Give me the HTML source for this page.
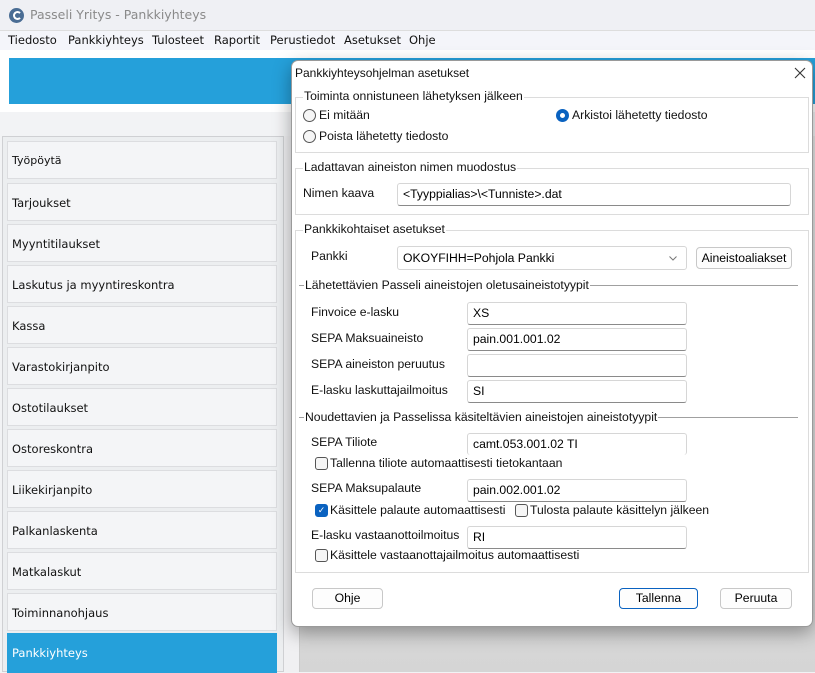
<!DOCTYPE html>
<html><head><meta charset="utf-8"><style>
*{box-sizing:border-box;margin:0;padding:0}
body{width:815px;height:672px;overflow:hidden;position:relative;background:#f2f3f5;font-family:"Liberation Sans",Arial,sans-serif;font-size:12px;color:#000}
.a{position:absolute}
.side{font-family:"DejaVu Sans","Liberation Sans",sans-serif;font-size:11.5px;color:#111}
.menu span{position:absolute;top:33px;font-family:"DejaVu Sans",sans-serif;font-size:11.5px;color:#111}
.item{position:absolute;left:7px;width:270px;height:38px;background:#f4f5f7;border:1px solid #dcdde0;padding-left:4px;line-height:38px}
.dlg{left:291px;top:60px;width:522px;height:567px;background:#fff;border:1px solid #9a9a9a;border-radius:7px;box-shadow:0 6px 18px rgba(0,0,0,.35)}
.grp{position:absolute;border:1px solid #dcdcdc}
.lg{position:absolute;background:#fff;padding:0 1px;font-size:12.2px;color:#111;white-space:nowrap}
.inp{position:absolute;border:1px solid #d6d6d6;border-bottom-color:#8a8a8a;border-radius:3px;background:#fff;padding-left:5px;line-height:21px;font-size:12.2px}
.lbl{position:absolute;font-size:12.2px;color:#111;white-space:nowrap}
.rad{position:absolute;width:13px;height:13px;border:1px solid #555;border-radius:50%;background:#f6f6f6}
.cb{position:absolute;width:13px;height:13px;border:1px solid #555;border-radius:3px;background:#f6f6f6}
.btn{position:absolute;border:1px solid #c8c8c8;border-radius:4px;background:#fdfdfd;text-align:center;line-height:19px;font-size:12.2px}
.line{position:absolute;height:1px;background:#a0a0a0}
</style></head><body>
<div class="a" style="left:0;top:0;width:815px;height:30px;background:#eff0f4"></div>
<div class="a" style="left:9px;top:8px;width:15px;height:15px;border-radius:50%;background:#4a6d94"></div>
<div class="a" style="left:13px;top:11px;width:9px;height:9px;border-radius:50%;border:2px solid #fff;border-right-color:transparent"></div>
<div class="a" style="left:30px;top:7px;color:#8a8a8a;font-size:12.5px;font-family:'DejaVu Sans',sans-serif">Passeli Yritys - Pankkiyhteys</div>
<div class="a" style="left:0;top:30px;width:815px;height:20px;background:#f4f5fa;border-top:1px solid #ddd"></div>
<div class="menu"><span style="left:8px">Tiedosto</span><span style="left:68px">Pankkiyhteys</span><span style="left:152px">Tulosteet</span><span style="left:214px">Raportit</span><span style="left:270px">Perustiedot</span><span style="left:344px">Asetukset</span><span style="left:409px">Ohje</span></div>
<div class="a" style="left:0;top:50px;width:815px;height:62px;background:#fff"></div>
<div class="a" style="left:9px;top:58px;width:806px;height:46px;background:#25a0da"></div>
<div class="a" style="left:2px;top:136px;width:282px;height:536px;border:1px solid #cfd0d3;background:#eceef0"></div>
<div class="a" style="left:284px;top:136px;width:16px;height:536px;background:#f0f0f2;border-right:1px solid #ccc"></div>
<div class="a" style="left:300px;top:136px;width:515px;height:536px;background:linear-gradient(#e8e8e8,#d5d5d5)"></div>
<div class="side">
<div class="item" style="top:141px;font-size:11px">Työpöytä</div>
<div class="item" style="top:183px">Tarjoukset</div>
<div class="item" style="top:224px">Myyntitilaukset</div>
<div class="item" style="top:265px">Laskutus ja myyntireskontra</div>
<div class="item" style="top:306px">Kassa</div>
<div class="item" style="top:347px">Varastokirjanpito</div>
<div class="item" style="top:388px">Ostotilaukset</div>
<div class="item" style="top:429px">Ostoreskontra</div>
<div class="item" style="top:470px">Liikekirjanpito</div>
<div class="item" style="top:511px">Palkanlaskenta</div>
<div class="item" style="top:552px">Matkalaskut</div>
<div class="item" style="top:593px">Toiminnanohjaus</div>
<div class="item" style="top:633px;height:40px;background:#25a0da;border-color:#25a0da;color:#fff">Pankkiyhteys</div>
</div>
<div class="a dlg">
<div class="a" style="left:3px;top:5px;font-size:12px;color:#111">Pankkiyhteysohjelman asetukset</div>
<svg class="a" style="left:502px;top:6px" width="12" height="12" viewBox="0 0 12 12"><path d="M1 1L11 11M11 1L1 11" stroke="#333" stroke-width="1.1"/></svg>
<div class="grp" style="left:3px;top:36px;width:514px;height:56px"></div>
<div class="lg" style="left:11px;top:28px">Toiminta onnistuneen lähetyksen jälkeen</div>
<div class="rad" style="left:11px;top:48px"></div><div class="lbl" style="left:27px;top:47px">Ei mitään</div>
<div class="rad" style="left:264px;top:48px;border:4px solid #0a62c0;background:#fff"></div><div class="lbl" style="left:280px;top:47px">Arkistoi lähetetty tiedosto</div>
<div class="rad" style="left:11px;top:69px"></div><div class="lbl" style="left:27px;top:68px">Poista lähetetty tiedosto</div>
<div class="grp" style="left:3px;top:107px;width:514px;height:47px"></div>
<div class="lg" style="left:11px;top:99px">Ladattavan aineiston nimen muodostus</div>
<div class="lbl" style="left:11px;top:125px">Nimen kaava</div>
<div class="inp" style="left:105px;top:122px;width:394px;height:23px">&lt;Tyyppialias&gt;\&lt;Tunniste&gt;.dat</div>
<div class="grp" style="left:3px;top:169px;width:514px;height:343px"></div>
<div class="lg" style="left:11px;top:161px">Pankkikohtaiset asetukset</div>
<div class="lbl" style="left:19px;top:188px">Pankki</div>
<div class="inp" style="left:105px;top:185px;width:290px;height:24px;border-bottom-color:#d6d6d6;line-height:22px">OKOYFIHH=Pohjola Pankki<svg style="position:absolute;right:9px;top:9px" width="8" height="5" viewBox="0 0 8 5"><path d="M0.5 0.5L4 4L7.5 0.5" stroke="#777" fill="none"/></svg></div>
<div class="btn" style="left:404px;top:186px;width:96px;height:22px;line-height:20px">Aineistoaliakset</div>
<div class="line" style="left:7px;top:224px;width:499px"></div>
<div class="lg" style="left:12px;top:217px">Lähetettävien Passeli aineistojen oletusaineistotyypit</div>
<div class="lbl" style="left:19px;top:244px">Finvoice e-lasku</div><div class="inp" style="left:175px;top:241px;width:220px;height:23px">XS</div>
<div class="lbl" style="left:19px;top:270px">SEPA Maksuaineisto</div><div class="inp" style="left:175px;top:267px;width:220px;height:23px">pain.001.001.02</div>
<div class="lbl" style="left:19px;top:296px">SEPA aineiston peruutus</div><div class="inp" style="left:175px;top:293px;width:220px;height:23px"></div>
<div class="lbl" style="left:19px;top:322px">E-lasku laskuttajailmoitus</div><div class="inp" style="left:175px;top:319px;width:220px;height:23px">SI</div>
<div class="line" style="left:7px;top:356px;width:499px"></div>
<div class="lg" style="left:12px;top:349px">Noudettavien ja Passelissa käsiteltävien aineistojen aineistotyypit</div>
<div class="lbl" style="left:19px;top:374px">SEPA Tiliote</div><div class="inp" style="left:175px;top:372px;width:220px;height:22px;border-bottom:none">camt.053.001.02 TI</div>
<div class="cb" style="left:23px;top:396px"></div><div class="lbl" style="left:38px;top:395px">Tallenna tiliote automaattisesti tietokantaan</div>
<div class="lbl" style="left:19px;top:420px">SEPA Maksupalaute</div><div class="inp" style="left:175px;top:418px;width:220px;height:23px">pain.002.001.02</div>
<div class="cb" style="left:23px;top:443px;background:#0a62c0;border-color:#0a62c0;color:#fff;font-size:9px;line-height:11px;text-align:center">✓</div><div class="lbl" style="left:38px;top:442px">Käsittele palaute automaattisesti</div>
<div class="cb" style="left:223px;top:443px"></div><div class="lbl" style="left:238px;top:442px">Tulosta palaute käsittelyn jälkeen</div>
<div class="lbl" style="left:19px;top:467px">E-lasku vastaanottoilmoitus</div><div class="inp" style="left:175px;top:465px;width:220px;height:23px">RI</div>
<div class="cb" style="left:23px;top:488px"></div><div class="lbl" style="left:38px;top:487px">Käsittele vastaanottajailmoitus automaattisesti</div>
<div class="btn" style="left:20px;top:527px;width:71px;height:21px">Ohje</div>
<div class="btn" style="left:327px;top:527px;width:79px;height:21px;border-color:#0a62c0">Tallenna</div>
<div class="btn" style="left:428px;top:527px;width:72px;height:21px">Peruuta</div>
</div>
</body></html>
